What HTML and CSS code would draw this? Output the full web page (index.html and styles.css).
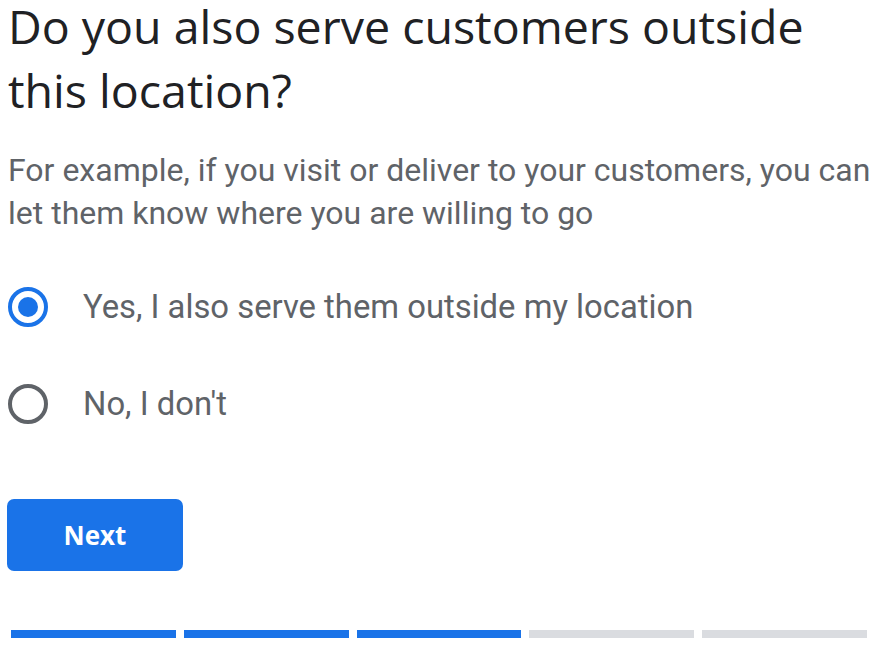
FILE: index.html
```html
<!DOCTYPE html>
<html>
<head>
<meta charset="utf-8">
<title>Service area</title>
<link rel="stylesheet" href="styles.css">
</head>
<body>
<h1 class="title">Do you also serve customers outside this location?</h1>

<p class="intro">For example, if you visit or deliver to your customers, you can let them know where you are willing to go</p>

<div class="options">
  <label class="option">
    <input type="radio" name="serve" checked>
    <span class="radio"></span>
    <span class="label">Yes, I also serve them outside my location</span>
  </label>
  <label class="option">
    <input type="radio" name="serve">
    <span class="radio"></span>
    <span class="label">No, I don't</span>
  </label>
</div>

<button class="next">Next</button>

<div class="progress">
  <span class="step done"></span>
  <span class="step done"></span>
  <span class="step done"></span>
  <span class="step"></span>
  <span class="step"></span>
</div>
</body>
</html>
```

FILE: styles.css
```css
body {
   margin: 0;
   padding: 0 4px 0 8px;
   background-color: white;
   font-family: Roboto, "Liberation Sans", sans-serif;
}

.title {
   margin: -6px 0 0;
   max-width: 830px;
   font-family: "Open Sans", sans-serif;
   font-weight: 400;
   font-size: 46.5px;
   line-height: 64px;
   color: #202124;
}

.intro {
   margin: 27px 0 0;
   font-size: 32px;
   line-height: 43px;
   color: #5f6368;
}

.options {
   margin-top: 52px;
   display: flex;
   flex-direction: column;
   gap: 57px;
}

.option {
   display: flex;
   align-items: center;
   gap: 35px;
   height: 40px;
   cursor: pointer;
}

.option input {
   display: none;
}

.radio {
   box-sizing: border-box;
   width: 40px;
   height: 40px;
   border: 4px solid #5f6368;
   border-radius: 50%;
   display: flex;
   align-items: center;
   justify-content: center;
}

.option input:checked + .radio {
   border-color: #1a73e8;
}

.option input:checked + .radio::after {
   content: "";
   width: 20px;
   height: 20px;
   border-radius: 50%;
   background: #1a73e8;
}

.label {
   font-size: 32.8px;
   color: #5f6368;
}

.next {
   display: block;
   margin-top: 75px;
   margin-left: -1px;
   width: 176px;
   height: 72px;
   border: none;
   border-radius: 7px;
   background: #1a73e8;
   color: white;
   font-family: "Open Sans", sans-serif;
   font-weight: 700;
   font-size: 26px;
}

.progress {
   display: flex;
   gap: 8px;
   margin: 59px 9px 0 3px;
}

.step {
   flex: 1;
   height: 8px;
   background: #dadce0;
}

.step.done {
   background: #1a73e8;
}
```
